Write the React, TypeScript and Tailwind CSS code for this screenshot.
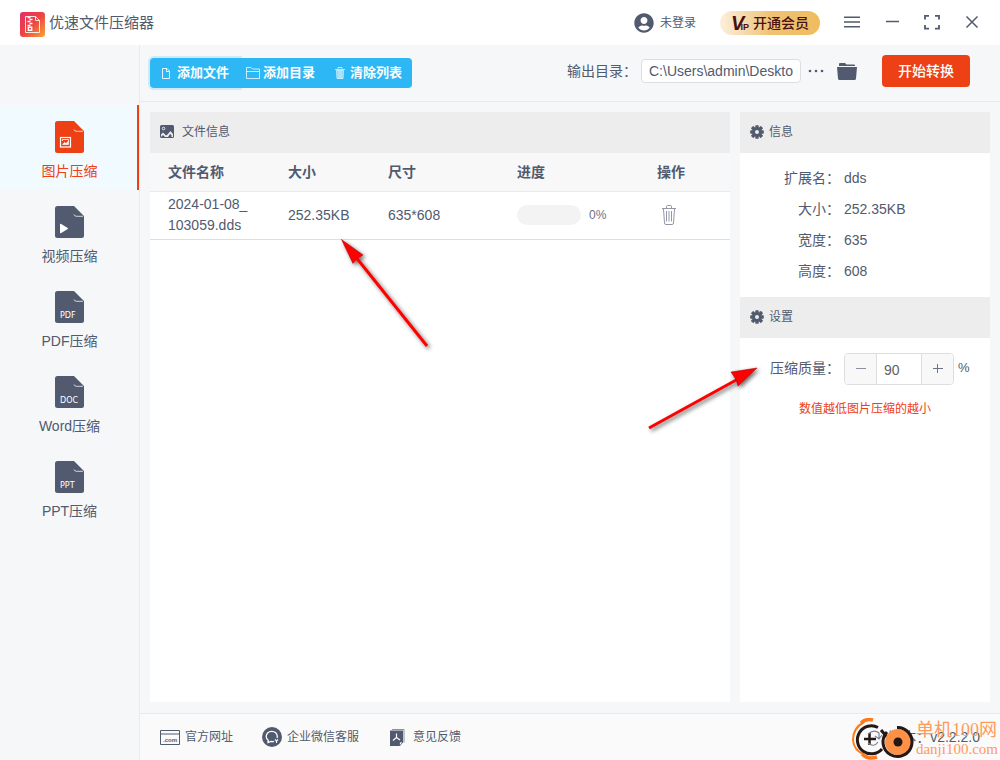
import { ReactNode, useState } from 'react';
import { FaUserCircle } from 'react-icons/fa';
import clsx from 'clsx';

const FileIcon = ({ children }: { children: ReactNode }) => (
  <svg width="29" height="32" viewBox="0 0 29 32" aria-hidden="true">
    <path d="M2.5 0H19l10 10v19.5a2.5 2.5 0 0 1-2.5 2.5h-24A2.5 2.5 0 0 1 0 29.5v-27A2.5 2.5 0 0 1 2.5 0z" fill="currentColor" />
    <path d="M19 8.5q.5 1.800 2.5 1.800H28" fill="none" stroke="#fff" strokeOpacity=".75" />
    {children}
  </svg>
);

const FileLabel = ({ text }: { text: string }) => (
  <text x="5" y="27" fontSize="8" fill="#fff" fontFamily="'DejaVu Sans', sans-serif">
    {text}
  </text>
);

const navItems = [
  {
    label: '图片压缩',
    mark: (
      <g fill="none" stroke="#fff">
        <rect x="5.5" y="16.5" width="10" height="9.5" strokeWidth="1.2" />
        <path d="M7.5 23.5l2-2 1.5 1 2.5-2.5v3.5z" fill="#fff" strokeWidth=".6" />
        <path d="M7.5 20v-1.500h6V21" strokeWidth=".8" />
      </g>
    ),
  },
  { label: '视频压缩', mark: <path d="M5 18.500c0-.8.600-1 1.200-.6l6.500 4c.5.400.5.800 0 1.200l-6.500 4c-.6.400-1.200.2-1.200-.6z" fill="#fff" /> },
  { label: 'PDF压缩', mark: <FileLabel text="PDF" /> },
  { label: 'Word压缩', mark: <FileLabel text="DOC" /> },
  { label: 'PPT压缩', mark: <FileLabel text="PPT" /> },
];

const infoRows = [
  ['扩展名：', 'dds'],
  ['大小：', '252.35KB'],
  ['宽度：', '635'],
  ['高度：', '608'],
];

const GearIcon = () => (
  <svg width="14" height="14" viewBox="0 0 14 14" fill="#515a6e" aria-hidden="true">
    <rect x="5.3" y="0.2" width="3.4" height="13.6" rx=".6" />
    <rect x="0.2" y="5.3" width="13.6" height="3.4" rx=".6" />
    <rect x="5.3" y="0" width="3.4" height="14" rx=".6" transform="rotate(45 7 7)" />
    <rect x="5.3" y="0" width="3.4" height="14" rx=".6" transform="rotate(-45 7 7)" />
    <circle cx="7" cy="7" r="4.8" />
    <circle cx="7" cy="7" r="2" fill="#ededed" />
  </svg>
);

const TrashIcon = ({ className }: { className?: string }) => (
  <svg viewBox="0 0 14 20" fill="none" stroke="currentColor" className={className} aria-hidden="true">
    <path d="M0 3.5h14M4.5 3V1.5Q4.500.5 5.5.5h3q1 0 1 1V3M1.500 4l1 14q.1 1.500 1.500 1.500h6q1.400 0 1.500-1.500l1-14" />
    <path d="M4.500 6v10.500M7 6v10.500M9.500 6v10.500" />
  </svg>
);

const PanelHeader = ({ icon, title, wide }: { icon: ReactNode; title: string; wide?: boolean }) => (
  <h2 className={clsx('flex h-[41px] items-center bg-[#ededed] px-[10px] pb-0.5 text-xs', wide ? 'gap-2' : 'gap-[5px]')}>
    {icon}
    {title}
  </h2>
);

const TopBar = () => (
  <header className="flex h-[45px] shrink-0 items-center bg-white px-5">
    <svg width="25" height="25" viewBox="0 0 25 25" className="mt-1" aria-hidden="true">
      <defs>
        <linearGradient id="logo" x1="0" y1="0" x2="1" y2="1">
          <stop offset="0" stopColor="#e5306a" />
          <stop offset=".5" stopColor="#ec4440" />
          <stop offset="1" stopColor="#f9a63a" />
        </linearGradient>
      </defs>
      <rect width="25" height="25" rx="3" fill="url(#logo)" />
      <g fill="none" stroke="#fff">
        <path d="M5.500 4.500h10l4 4v12h-14zM15.500 4.500v4h4" strokeOpacity=".85" />
        <path d="M7.500 5.500h3M9.500 7.500h3M7.500 9.500h3M9.500 11.500h3M7.500 13.500h3" strokeWidth="1.300" />
        <path d="M8.300 15.300h3.400v2.900H8.300z" strokeWidth="1.400" />
      </g>
    </svg>
    <h1 className="ml-1 mt-0.5 text-[15px]">优速文件压缩器</h1>

    <div className="ml-auto flex items-center gap-6">
      <button className="flex items-center gap-1.5 text-xs">
        <FaUserCircle className="size-5" />
        未登录
      </button>
      <button className="flex h-6 w-[100px] items-center justify-center rounded-full bg-gradient-to-r from-[#fcefdc] via-[#efc375] to-[#efbc5e] text-sm font-medium text-[#4a0f10]">
        <span className="flex items-end font-['Liberation_Sans',sans-serif] font-bold">
          <span className="text-xl italic leading-4">V</span>
          <span className="-ml-1 text-[9px] leading-[8px]">IP</span>
        </span>
        <span className="ml-1">开通会员</span>
      </button>
      <button aria-label="菜单">
        <svg width="16" height="16" viewBox="0 0 16 16" stroke="currentColor" strokeWidth="1.500">
          <path d="M0 2.200h16M0 7h16M0 11.800h16" />
        </svg>
      </button>
      <button aria-label="最小化">
        <svg width="16" height="16" viewBox="0 0 16 16" stroke="currentColor" strokeWidth="1.500">
          <path d="M2 6.500h13" />
        </svg>
      </button>
      <button aria-label="最大化">
        <svg width="16" height="16" viewBox="0 0 16 16" fill="none" stroke="currentColor" strokeWidth="1.800">
          <path d="M1 4.500V0.900h4M11 .9h4v3.600M15 10v3.600h-4M5 13.600H1V10" />
        </svg>
      </button>
      <button aria-label="关闭">
        <svg width="16" height="16" viewBox="0 0 16 16" stroke="currentColor" strokeWidth="1.500">
          <path d="M2.500 1.500l11 11M13.500 1.500l-11 11" />
        </svg>
      </button>
    </div>
  </header>
);

const Toolbar = () => (
  <div className="flex h-[57px] items-center border-b border-[#e8eaec] pl-[10px] pr-[30px]">
    <div className="flex h-[30px] rounded bg-[#2db7f5] text-[13px] font-bold text-white">
      <button className="flex w-[90px] items-center rounded-l pl-3 shadow-[0_0_0_2px_rgba(45,183,245,0.2)]">
        <svg width="8" height="11" viewBox="0 0 8 11" fill="none" stroke="currentColor" strokeOpacity=".85" className="mr-[7px]">
          <path d="M.5.500H5l2.500 2.500v7.500h-7zM4.500.5v3h3" />
        </svg>
        添加文件
      </button>
      <button className="relative flex w-[88px] items-center bg-[#2db7f5] pl-1.5">
        <svg width="14" height="12" viewBox="0 0 14 12" fill="none" stroke="currentColor" strokeOpacity=".75" className="mr-[3px]">
          <path d="M.5 11.500V.5H5l1.500 1.500h7v9.500zM.5 4.500h13" />
        </svg>
        添加目录
      </button>
      <button className="flex w-[84px] items-center pl-[7px]">
        <svg width="10" height="12" viewBox="0 0 10 12" fill="none" stroke="currentColor" strokeOpacity=".65" className="mr-[5px]">
          <path d="M0 2.500h10M3 2V.5h4V2" />
          <path d="M1.500 3.500l.5 8h6l.5-8z" fill="currentColor" fillOpacity=".4" />
          <path d="M4 4v7M6 4v7" />
        </svg>
        清除列表
      </button>
    </div>

    <div className="ml-auto flex items-center pb-1">
      <label htmlFor="output" className="mr-1 text-sm">
        输出目录：
      </label>
      <input
        id="output"
        readOnly
        defaultValue="C:\Users\admin\Deskto"
        className="h-6 w-40 rounded-sm border border-[#dcdee2] bg-white px-[7px] text-sm outline-none"
      />
      <button aria-label="更多" className="ml-[7px]">
        <svg width="16" height="4" viewBox="0 0 16 4" fill="currentColor">
          <circle cx="2" cy="2" r="1.300" />
          <circle cx="8" cy="2" r="1.300" />
          <circle cx="14" cy="2" r="1.300" />
        </svg>
      </button>
      <button aria-label="打开目录" className="ml-[13px]">
        <svg width="20" height="17" viewBox="0 0 20 17" fill="currentColor">
          <path d="M2 3V1q0-1 1-1h5l1.500 1.500H17q1 0 1 1V3z" />
          <path d="M0 4h20l-1 11.500q-.1 1.500-1.500 1.500h-15Q1.100 17 1 15.500z" />
        </svg>
      </button>
      <button className="ml-[25px] h-8 w-[88px] rounded bg-[#ed4014] text-sm font-medium text-white">开始转换</button>
    </div>
  </div>
);

const FilePanel = () => (
  <section className="flex-1 bg-white">
    <PanelHeader
      wide
      title="文件信息"
      icon={
        <svg width="14" height="13" viewBox="0 0 14 13" aria-hidden="true">
          <rect width="14" height="13" rx="1.500" fill="#515a6e" />
          <circle cx="3.500" cy="3.500" r="1.300" fill="none" stroke="#ededed" />
          <path d="M1 12V9.500l2-2 3 3 1.500-1 3-3.500L13 9v3h-1.500v-2l-1.500-1-2 3H5l-2-2z" fill="#ededed" />
        </svg>
      }
    />
    <table className="w-full table-fixed text-left text-sm">
      <thead>
        <tr className="h-[38px] border-b border-[#e8eaec] bg-[#f8f8f9]">
          <th className="w-[120px] px-[18px]">文件名称</th>
          <th className="w-[100px] px-[18px]">大小</th>
          <th className="w-[129px] px-[18px]">尺寸</th>
          <th className="w-[140px] px-[18px]">进度</th>
          <th className="px-[18px]">操作</th>
        </tr>
      </thead>
      <tbody>
        <tr className="h-12 border-b border-[#dcdee2]">
          <td className="break-all px-[18px] leading-[21px]">2024-01-08_103059.dds</td>
          <td className="px-[18px]">252.35KB</td>
          <td className="px-[18px]">635*608</td>
          <td className="px-[18px]">
            <div className="flex items-center gap-2 text-xs text-[#6b7385]">
              <div className="h-5 w-16 rounded-full bg-[#f3f3f3]" />
              0%
            </div>
          </td>
          <td className="px-[18px]">
            <button aria-label="删除" className="ml-[5px] block text-[#9197a4]">
              <TrashIcon className="h-5 w-[14px]" />
            </button>
          </td>
        </tr>
      </tbody>
    </table>
  </section>
);

const SidePanel = () => {
  const [quality, setQuality] = useState(90);

  return (
    <aside className="w-[250px] bg-white text-sm">
      <PanelHeader icon={<GearIcon />} title="信息" />
      <dl className="py-[10px] leading-[31px]">
        {infoRows.map(([label, value]) => (
          <div key={label} className="flex h-[31px] gap-1">
            <dt className="w-[100px] text-right">{label}</dt>
            <dd>{value}</dd>
          </div>
        ))}
      </dl>

      <PanelHeader icon={<GearIcon />} title="设置" />
      <div className="mt-[15px] flex items-center gap-1">
        <label htmlFor="quality" className="w-[100px] pb-0.5 text-right">
          压缩质量：
        </label>
        <div className="flex h-8 w-[110px] overflow-hidden rounded border border-[#dcdee2]">
          <button aria-label="减少" className="flex w-8 items-center justify-center border-r border-[#dcdee2] bg-[#f8f8f9]" onClick={() => setQuality(quality - 1)}>
            <svg width="10" height="10" viewBox="0 0 10 10" stroke="#8a909c">
              <path d="M0 4.500h10" />
            </svg>
          </button>
          <input
            id="quality"
            value={quality}
            onChange={(e) => setQuality(Number(e.target.value))}
            className="w-0 flex-1 pl-[7px] pt-0.5 text-[#606266] outline-none"
          />
          <button aria-label="增加" className="flex w-8 items-center justify-center border-l border-[#dcdee2] bg-[#f8f8f9]" onClick={() => setQuality(quality + 1)}>
            <svg width="10" height="10" viewBox="0 0 10 10" stroke="#6b7385">
              <path d="M0 4.500h10M4.500 0v9" />
            </svg>
          </button>
        </div>
        <span className="pb-0.5 text-[13px]">%</span>
      </div>
      <p className="mt-4 text-center text-xs text-[#ed4014]">数值越低图片压缩的越小</p>
    </aside>
  );
};

const Footer = () => (
  <footer className="flex h-[47px] shrink-0 items-center border-t border-[#e8eaec] bg-[#fafafa] px-5 text-xs">
    <a href="#site" className="flex items-center gap-[5px]">
      <svg width="20" height="15" viewBox="0 0 20 15" aria-hidden="true">
        <path d="M.5.500h19v14H.5zM.5 4h19" fill="none" stroke="currentColor" />
        <text x="3" y="12" fontSize="6" fontWeight="bold" fill="currentColor" fontFamily="'Liberation Sans', sans-serif">
          .com
        </text>
      </svg>
      官方网址
    </a>
    <a href="#service" className="ml-[29px] flex items-center gap-[5px]">
      <svg width="20" height="20" viewBox="0 0 20 20" fill="none" aria-hidden="true">
        <circle cx="10" cy="10" r="10" fill="#515a6e" />
        <path d="M12 14.300q-1.500.4-3 .1L6 15.500l.2-2.300Q4.200 11.500 4.200 9.500C4.200 6.500 6.700 4.300 9.800 4.300s5.500 2.200 5.500 5.200q0 .8-.2 1.500" stroke="#fff" strokeWidth="1.300" />
        <path d="M13 12.500l1.500 1.500 1.500-1.500M14.500 14v2" stroke="#fff" strokeWidth="1.100" />
      </svg>
      企业微信客服
    </a>
    <a href="#feedback" className="ml-[31px] flex items-center gap-2">
      <svg width="15" height="17" viewBox="0 0 15 17" aria-hidden="true">
        <path d="M2 .5h12v13" fill="none" stroke="#8a909c" />
        <path d="M0 1.500h13v11L9.500 17H0z" fill="#515a6e" />
        <path d="M9.500 17v-4H13z" fill="#fafafa" stroke="#515a6e" strokeWidth=".8" />
        <path d="M6.500 4.500v4l-3.500 3M6.500 8.500l3.500 2.500" fill="none" stroke="#fff" strokeWidth="1.200" />
      </svg>
      意见反馈
    </a>
    <span className="ml-auto text-sm">版本：v2.2.2.0</span>
  </footer>
);

const Arrows = () => (
  <svg width="450" height="220" viewBox="330 225 450 220" className="pointer-events-none absolute left-[330px] top-[225px]" aria-hidden="true">
    <defs>
      <filter id="shade" x="-20%" y="-20%" width="140%" height="140%">
        <feDropShadow dx="2" dy="2" stdDeviation="2" floodColor="#000" floodOpacity=".6" />
      </filter>
    </defs>
    <g fill="#f00" stroke="#f00" filter="url(#shade)">
      <path d="M357 258.500L427 346" strokeWidth="3" />
      <path d="M341.500 239.500l21.500 15.500-6 3.500-4 5z" stroke="#900" strokeWidth=".5" />
    </g>
    <g fill="#f00" stroke="#f00" filter="url(#shade)">
      <path d="M738 379L649 428" strokeWidth="3" />
      <path d="M757 368l-26 4 5 7.500 2 6.500z" stroke="#900" strokeWidth=".5" />
    </g>
  </svg>
);

const Watermark = () => (
  <div className="pointer-events-none absolute bottom-0 right-0.5 flex items-center gap-px">
    <svg width="64" height="42" viewBox="0 0 64 42" fill="none" aria-hidden="true">
      <path d="M13 4Q2 10 2 22q1 11 11 14" stroke="#ff7a1a" strokeWidth="2" />
      <path d="M10 5q5-5 12-3M11 36q6 6 15 3" stroke="#ff7a1a" strokeWidth="3.500" />
      <path d="M27 9.500A14 14 0 1 0 31 31" stroke="#231815" strokeWidth="3" />
      <path d="M30 12l6 7" stroke="#231815" strokeWidth="3" />
      <path d="M18.500 15v12M13 21h12" stroke="#231815" strokeWidth="2.500" />
      <path d="M27 24q-4 6-10 1M17 16q6-5 11-1v6m-4-3 4 3 3-4" stroke="#7c8496" strokeWidth="1.200" />
      <circle cx="47" cy="24" r="13" fill="#ff9147" />
      <path d="M46 9.500A14.500 14.500 0 1 1 36 14" stroke="#231815" strokeWidth="3" />
      <circle cx="47" cy="24" r="4.500" fill="#231815" />
    </svg>
    <div className="font-['Liberation_Serif','Noto_Sans_CJK_SC',serif] text-[#ff9a5c]">
      <div className="text-lg leading-5">单机100网</div>
      <div className="text-[15px] leading-[18px]">danji100.com</div>
    </div>
  </div>
);

const App = () => {
  const [active, setActive] = useState('图片压缩');

  return (
    <div className="relative flex min-h-screen flex-col bg-[#f5f7f9] font-['Liberation_Sans','Noto_Sans_CJK_SC',sans-serif] text-[#515a6e]">
      <TopBar />
      <div className="flex flex-1">
        {/* Sidebar */}
        <nav className="w-[140px] shrink-0 border-r border-[#e8eaec] pt-[60px]">
          {navItems.map((item) => (
            <button
              key={item.label}
              onClick={() => setActive(item.label)}
              className={clsx(
                'flex h-[85px] w-full flex-col items-center gap-2 pt-4 text-sm leading-5',
                active === item.label ? 'border-r-2 border-[#ed4014] bg-[#f0faff] pl-0.5 text-[#ed4014]' : ''
              )}
            >
              <FileIcon>{item.mark}</FileIcon>
              {item.label}
            </button>
          ))}
        </nav>

        {/* Main Content */}
        <div className="flex min-w-0 flex-1 flex-col">
          <Toolbar />
          <main className="flex flex-1 gap-[10px] px-[10px] pb-[11px] pt-[10px]">
            <FilePanel />
            <SidePanel />
          </main>
          <Footer />
        </div>
      </div>
      <Arrows />
      <Watermark />
    </div>
  );
};

export default App;
